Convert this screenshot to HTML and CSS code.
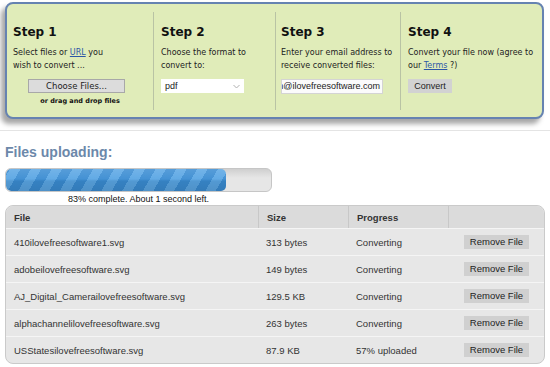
FILE: index.html
```html
<!DOCTYPE html>
<html lang="en">

<head>
    <meta charset="UTF-8">
    <meta name="viewport" content="width=device-width, initial-scale=1.0">
    <title>Convert files</title>
    <link rel="stylesheet" href="styles.css">
</head>

<body>
    <div class="steps_wrap">
        <div class="steps">
            <div class="step step_1">
                <div class="step_title">Step 1</div>
                <div class="step_text">Select files or <a href="#">URL</a> you wish to convert ...</div>
                <div class="choose_btn">Choose Files...</div>
                <div class="drag_text">or drag and drop files</div>
            </div>
            <div class="step">
                <div class="step_title">Step 2</div>
                <div class="step_text">Choose the format to convert to:</div>
                <div class="format_select">
                    <span>pdf</span>
                    <svg width="7" height="5" viewBox="0 0 7 5"><path d="M0.5 1 L3.5 4 L6.5 1" fill="none" stroke="#b0b0b0" stroke-width="1" /></svg>
                </div>
            </div>
            <div class="step">
                <div class="step_title">Step 3</div>
                <div class="step_text">Enter your email address to receive converted files:</div>
                <div class="email_input"><span>admin@ilovefreesoftware.com</span></div>
            </div>
            <div class="step">
                <div class="step_title">Step 4</div>
                <div class="step_text">Convert your file now (agree to our <a href="#">Terms</a> ?)</div>
                <div class="convert_btn">Convert</div>
            </div>
        </div>
    </div>

    <div class="upload_wrap">
        <h2 class="upload_title">Files uploading:</h2>
        <div class="progress">
            <div class="progress_fill" style="width: 83%;"></div>
        </div>
        <div class="progress_text">83% complete. About 1 second left.</div>

        <table class="file_table">
            <thead>
                <tr>
                    <th class="col_file">File</th>
                    <th class="col_size">Size</th>
                    <th class="col_progress">Progress</th>
                    <th class="col_action"></th>
                </tr>
            </thead>
            <tbody>
                <tr>
                    <td>410ilovefreesoftware1.svg</td>
                    <td>313 bytes</td>
                    <td>Converting</td>
                    <td><span class="remove_btn">Remove File</span></td>
                </tr>
                <tr>
                    <td>adobeilovefreesoftware.svg</td>
                    <td>149 bytes</td>
                    <td>Converting</td>
                    <td><span class="remove_btn">Remove File</span></td>
                </tr>
                <tr>
                    <td>AJ_Digital_Camerailovefreesoftware.svg</td>
                    <td>129.5 KB</td>
                    <td>Converting</td>
                    <td><span class="remove_btn">Remove File</span></td>
                </tr>
                <tr>
                    <td>alphachannelilovefreesoftware.svg</td>
                    <td>263 bytes</td>
                    <td>Converting</td>
                    <td><span class="remove_btn">Remove File</span></td>
                </tr>
                <tr>
                    <td>USStatesilovefreesoftware.svg</td>
                    <td>87.9 KB</td>
                    <td>57% uploaded</td>
                    <td><span class="remove_btn">Remove File</span></td>
                </tr>
            </tbody>
        </table>
    </div>
</body>

</html>
```

FILE: styles.css
```css
body {
    margin: 0;
    background-color: #ffffff;
    font-family: "Liberation Sans", Arial, sans-serif;
    color: #222;
}

/* 상단 단계 박스 */
.steps_wrap {
    padding: 2px 6px 0 5px;
    height: 131px;
    box-sizing: border-box;
    border-bottom: 1px solid #e4e4e4;
}

.steps {
    display: flex;
    height: 117px;
    box-sizing: border-box;

    background-color: #e0ecb9;
    border: 2px solid #6683b1;
    border-radius: 8px;
    box-shadow: -4px 5px 5px rgba(0, 0, 0, 0.35);
}

.step {
    margin-top: 8px;
    height: 98px;
    padding: 12px 7px 0 7px;
    box-sizing: border-box;
    border-left: 1px solid #b9c3a4;

    font-family: "DejaVu Sans", Verdana, sans-serif;
}

.step_1 {
    width: 146px;
    padding-left: 6px;
    border-left: none;
}

.step_1 .step_text {
    width: 100px;
}

.step:nth-child(2) {
    width: 122px;
}

.step:nth-child(3) {
    width: 125px;
    padding-left: 5px;
}

.step:nth-child(4) {
    flex: 1;
}

.step_title {
    font-size: 12px;
    font-weight: bold;
    line-height: 16px;
    color: #111;
}

.step_text {
    margin-top: 6px;
    height: 26px;
    font-size: 8px;
    line-height: 13px;
    color: #222;
}

.step_text a {
    color: #2c57a6;
}

.choose_btn {
    width: 97px;
    height: 14px;
    margin: 7px 0 0 15px;
    box-sizing: border-box;

    background-color: #dcdcdc;
    border: 1px solid #a8a8a8;
    font-size: 8.5px;
    line-height: 12px;
    text-align: center;
    color: #222;
}

.drag_text {
    margin-top: 2px;
    margin-left: 1px;
    font-size: 6.5px;
    font-weight: bold;
    line-height: 12px;
    text-align: center;
    color: #111;
}

.format_select {
    display: flex;
    justify-content: space-between;
    align-items: center;
    width: 83px;
    height: 14px;
    margin-top: 7px;
    padding: 0 4px 0 4px;
    box-sizing: border-box;

    background-color: #fff;
    font-family: "Liberation Sans", Arial, sans-serif;
    font-size: 9px;
}

.email_input {
    width: 102px;
    height: 15px;
    margin-top: 7px;
    padding-right: 2px;
    box-sizing: border-box;
    overflow: hidden;
    white-space: nowrap;
    direction: rtl;

    background-color: #fbfbfb;
    border: 1px solid #d4d4d4;
    font-family: "Liberation Sans", Arial, sans-serif;
    font-size: 9px;
    line-height: 13px;
}

.email_input span {
    direction: ltr;
    display: inline-block;
}

.convert_btn {
    width: 44px;
    height: 14px;
    margin-top: 7px;

    background-color: #d2d2d2;
    font-family: "Liberation Sans", Arial, sans-serif;
    font-size: 9px;
    line-height: 14px;
    text-align: center;
    color: #222;
}

/* 업로드 영역 */
.upload_wrap {
    padding: 0 5px 0 5px;
}

.upload_title {
    margin: 12px 0 0 0;
    font-size: 14px;
    line-height: 18px;
    color: #6c88aa;
}

.progress {
    width: 267px;
    height: 24px;
    margin-top: 7px;
    box-sizing: border-box;
    overflow: hidden;

    border: 1px solid #c6c6c6;
    border-radius: 6px;
    background: linear-gradient(#cfcfcf, #e6e6e6 40%, #e6e6e6);
}

.progress_fill {
    height: 100%;
    border-radius: 5px;
    background:
        linear-gradient(rgba(255, 255, 255, 0.15), rgba(255, 255, 255, 0.05) 45%, rgba(0, 0, 0, 0.08) 55%, rgba(0, 0, 0, 0.12)),
        repeating-linear-gradient(-60deg, #3a8cd2 0, #3a8cd2 9px, #5aa6e4 9px, #5aa6e4 18px);
}

.progress_text {
    width: 267px;
    margin-top: 1px;
    font-size: 9px;
    line-height: 12px;
    text-align: center;
    color: #111;
}

.file_table {
    width: 540px;
    margin-top: 0;
    border-collapse: separate;
    border-spacing: 0;
    border: 1px solid #cacaca;
    border-radius: 8px;
    background-color: #e7e7e7;
    font-size: 9.5px;
    color: #333;
}

.file_table th {
    height: 22px;
    padding: 0 0 0 8px;
    text-align: left;
    background-color: #dbdbdb;
    border-left: 1px solid #c8c8c8;
    color: #333;
}

.file_table th:first-child {
    border-left: none;
    border-top-left-radius: 8px;
}

.file_table th:last-child {
    border-top-right-radius: 8px;
}

.file_table td {
    height: 26px;
    padding: 0 0 0 8px;
    border-top: 1px solid #f5f5f5;
}

.col_file {
    width: 244px;
}

.col_size {
    width: 81px;
}

.col_progress {
    width: 91px;
}

.file_table td:last-child {
    padding-left: 16px;
}

.remove_btn {
    display: inline-block;
    width: 65px;
    height: 14px;
    background-color: #d0d0d0;
    font-size: 9.5px;
    line-height: 14px;
    text-align: center;
    color: #222;
}
```
